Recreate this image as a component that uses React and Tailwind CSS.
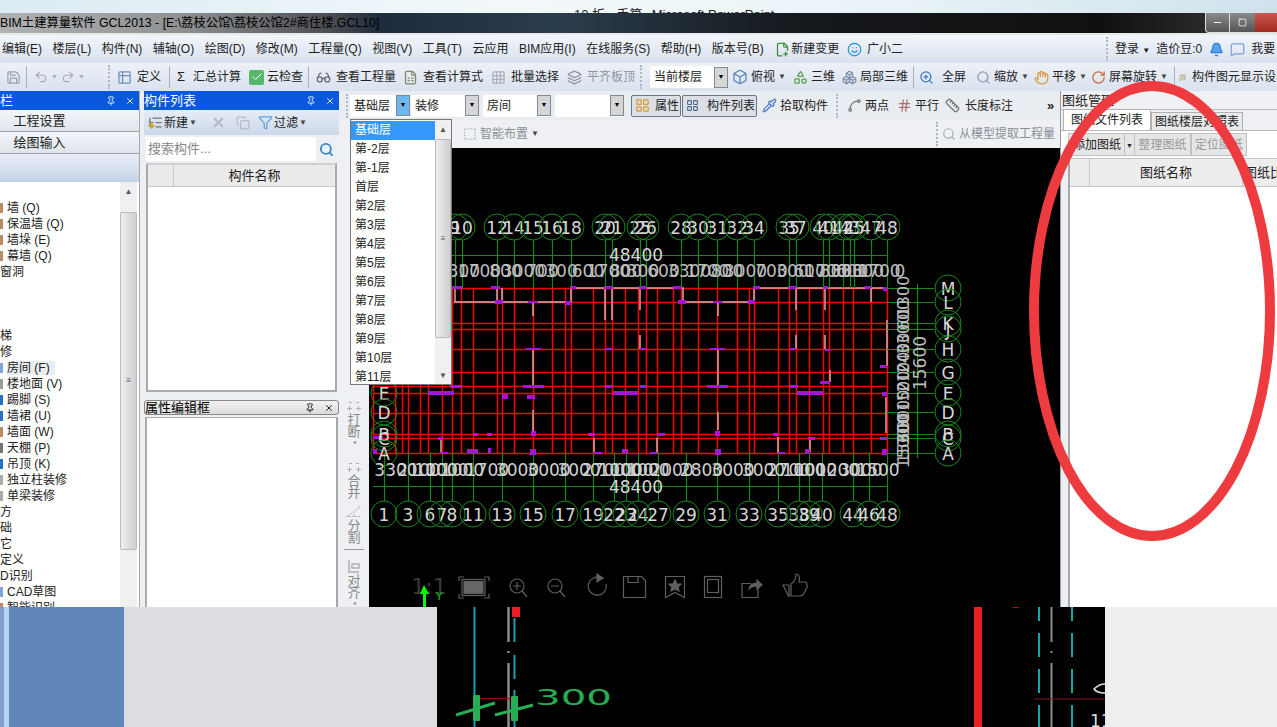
import {
  Save, Undo2, Redo2, Table2, Glasses, FileSpreadsheet, Grid3x3, Layers, Box, Shapes, Boxes,
  ZoomIn, Search, Hand, RotateCw, PencilRuler, FilePlus2, Smile, Bell, MessageSquare,
  Pin, X, Plus, Copy, Filter, ListTree, Pipette, Ruler, Hash, Spline, LayoutGrid, SquareDashed,
  Check, Minus, Square,
} from "lucide-react";

const cjk = "font-['Liberation_Sans','Noto_Sans_CJK_SC',sans-serif]";

const menus = ["编辑(E)", "楼层(L)", "构件(N)", "辅轴(O)", "绘图(D)", "修改(M)", "工程量(Q)", "视图(V)", "工具(T)", "云应用", "BIM应用(I)", "在线服务(S)", "帮助(H)", "版本号(B)"];
const floors = ["基础层", "第-2层", "第-1层", "首层", "第2层", "第3层", "第4层", "第5层", "第6层", "第7层", "第8层", "第9层", "第10层", "第11层"];

const treeRows = [
  ["墙 (Q)", "pl-[7px]", "bg-[#b98a66]"], ["保温墙 (Q)", "pl-[7px]", "bg-[#b98a66]"], ["墙垛 (E)", "pl-[7px]", "bg-[#b98a66]"], ["幕墙 (Q)", "pl-[7px]", "bg-[#b98a66]"],
  ["窗洞", "", ""], ["", "", ""], ["", "", ""], ["", "", ""], ["梯", "", ""], ["修", "", ""],
  ["房间 (F)", "pl-[7px]", "bg-[#7da7d8]"], ["楼地面 (V)", "pl-[7px]", "bg-[#9a9a9a]"], ["踢脚 (S)", "pl-[7px]", "bg-[#2a70c0]"], ["墙裙 (U)", "pl-[7px]", "bg-[#2a70c0]"],
  ["墙面 (W)", "pl-[7px]", "bg-[#b98a66]"], ["天棚 (P)", "pl-[7px]", "bg-[#777777]"], ["吊顶 (K)", "pl-[7px]", "bg-[#2a70c0]"], ["独立柱装修", "pl-[7px]", "bg-[#aaaaaa]"], ["单梁装修", "pl-[7px]", "bg-[#aaaaaa]"],
  ["方", "", ""], ["础", "", ""], ["它", "", ""], ["定义", "", ""], ["D识别", "", ""],
  ["CAD草图", "pl-[7px]", "bg-[#7da7d8]"], ["智能识别", "pl-[7px]", "bg-[#b98a66]"],
];

const hLines = [288, 302, 323, 329, 349, 372, 386, 393, 413, 434, 438, 453];
const vLines = [373, 395, 402, 408, 420, 428, 442, 452, 461, 473, 497, 502, 514, 533, 552, 565, 571, 593, 605, 612, 625, 638, 646, 657, 673, 681, 698, 717, 737, 749, 754, 778, 789, 796, 809, 823, 829, 843, 853, 871, 887];

const topBubbles = [[455, "9"], [462, "10"], [497, "12"], [514, "14"], [533, "15"], [552, "16"], [571, "18"], [605, "20"], [612, "21"], [640, "25"], [646, "26"], [681, "28"], [698, "30"], [717, "31"], [737, "32"], [754, "34"], [789, "35"], [796, "37"], [823, "40"], [829, "41"], [843, "42"], [850, "43"], [854, "45"], [871, "47"], [887, "48"]];
const bottomBubbles = [[384, "1"], [408, "3"], [430, "6"], [442, "7"], [452, "8"], [473, "11"], [502, "13"], [533, "15"], [565, "17"], [593, "19"], [614, "22"], [626, "23"], [638, "24"], [658, "27"], [686, "29"], [717, "31"], [749, "33"], [778, "35"], [799, "38"], [809, "39"], [822, "40"], [853, "44"], [869, "46"], [887, "48"]];
const sideBubbles = [[288, "M"], [302, "L"], [323, "K"], [329, "J"], [349, "H"], [372, "G"], [393, "E"], [412, "D"], [434, "B"], [438, "C"], [453, "A"]];

const dimValues = ["3300", "1700", "800", "3000", "700", "300", "600", "1700", "800", "300", "600"];
const bottomDims = ["3300", "2100", "1000", "1000", "1000", "1700", "3000", "3000", "3000", "2700", "1000", "1000", "1000", "2000", "2800", "3000", "3000", "2700", "1000", "1000", "1200", "3000", "1500", "1700"];
const sideDims = ["1300", "600", "3300", "2400", "2100", "1500", "3000", "300", "1500"];

const purple = [
  [452, 286, 10, 3], [491, 286, 9, 3], [495, 300, 8, 4], [528, 301, 10, 2], [565, 301, 6, 4], [570, 286, 6, 3], [604, 286, 9, 3], [639, 286, 8, 3], [673, 286, 9, 3], [678, 300, 8, 4], [713, 301, 10, 2], [748, 300, 7, 4], [753, 286, 7, 3], [788, 286, 8, 3], [823, 286, 5, 3], [865, 286, 6, 3], [883, 287, 4, 4],
  [526, 348, 15, 2], [605, 348, 7, 2], [640, 348, 6, 2], [710, 348, 15, 2], [790, 348, 6, 2], [825, 349, 5, 2], [880, 365, 7, 3],
  [450, 385, 12, 3], [523, 385, 21, 3], [605, 385, 8, 3], [640, 385, 6, 3], [707, 385, 21, 3], [790, 385, 8, 3], [820, 381, 10, 3], [428, 391, 26, 4], [613, 391, 25, 4], [797, 391, 26, 4], [502, 394, 6, 5], [527, 395, 8, 4], [882, 392, 5, 4],
  [473, 433, 5, 3], [487, 433, 5, 3], [531, 431, 5, 5], [588, 433, 7, 3], [657, 433, 8, 3], [715, 431, 5, 5], [773, 433, 5, 3], [808, 437, 7, 3], [880, 437, 7, 3], [373, 436, 10, 3], [438, 437, 5, 3],
  [373, 449, 4, 5], [440, 452, 8, 2], [467, 449, 11, 4], [488, 448, 3, 5], [530, 449, 6, 6], [593, 452, 9, 2], [622, 449, 6, 4], [650, 452, 7, 2], [715, 449, 6, 6], [778, 452, 7, 2], [805, 449, 5, 4], [882, 449, 5, 6],
];
const walls = [
  "452,288 455,288 455,302 502,302 502,288", "497,288 497,302 571,302 571,288 683,288 683,302 754,302 754,288 887,288",
  "533,302 533,316", "533,349 533,386", "605,288 605,320", "612,288 612,320", "640,288 640,310", "640,335 640,349", "718,302 718,316", "718,349 718,386",
  "796,288 796,310", "796,335 796,349", "825,288 825,310", "825,335 825,349", "830,370 830,382", "871,288 871,302", "887,320 887,366", "886,397 886,433",
  "718,412 718,430", "778,437 778,453", "810,438 810,452", "441,438 441,453", "594,438 594,453", "657,438 657,453", "533,410 533,433",
];

function midpoints(list) {
  return list.slice(0, -1).map(([x], i) => (x + list[i + 1][0]) / 2);
}

function Bubble({ x, y, label }) {
  return (
    <g>
      <circle cx={x} cy={y} r="13" fill="none" stroke="#17861c" strokeWidth="1" />
      <text x={x} y={y + 1} textAnchor="middle" dominantBaseline="central" fontSize="17" fill="#d6d6d6" fontFamily="DejaVu Sans, sans-serif">{label}</text>
    </g>
  );
}

function CadDrawing() {
  const numberProps = { fontFamily: "DejaVu Sans, sans-serif", fill: "#bdbdbd", textAnchor: "middle", dominantBaseline: "central" };
  return (
    <svg className="block w-[691px] h-[459px]" viewBox="369 148 691 459">
      <g strokeWidth="1.5" stroke="#ff0000">
        {hLines.map((y) => <line key={y} x1="373" x2="887" y1={y + 0.5} y2={y + 0.5} />)}
        {vLines.map((x) => <line key={x} x1={x + 0.5} x2={x + 0.5} y1="288" y2="453" />)}
      </g>
      {walls.map((w) => <polyline key={w} points={w} fill="none" stroke="#dca5a5" strokeWidth="1.5" />)}
      {purple.map(([x, y, w, h]) => <rect key={`${x}-${y}`} x={x} y={y} width={w} height={h} fill="#a414dc" />)}

      <g strokeWidth="1.2" stroke="#17861c">
        <line x1="452" x2="887" y1="255.5" y2="255.5" />
        <line x1="373" x2="887" y1="486.5" y2="486.5" />
        <line x1="917.5" x2="917.5" y1="284" y2="458" />
        {topBubbles.map(([x]) => <line key={x} x1={x + 0.5} x2={x + 0.5} y1="240" y2="288" />)}
        {bottomBubbles.map(([x]) => <line key={x} x1={x + 0.5} x2={x + 0.5} y1="453" y2="501" />)}
        {sideBubbles.map(([y]) => <line key={y} x1="887" x2="934" y1={y + 0.5} y2={y + 0.5} />)}
      </g>

      {topBubbles.map(([x, t]) => <Bubble key={x} x={x} y={227} label={t} />)}
      {bottomBubbles.map(([x, t]) => <Bubble key={x} x={x} y={514} label={t} />)}
      {sideBubbles.map(([y, t]) => <Bubble key={y} x={948} y={y} label={t} />)}
      {sideBubbles.slice(6).map(([y, t]) => <Bubble key={y} x={384} y={y} label={t} />)}

      <text x="636" y="255" fontSize="17" {...numberProps} fill="#d6d6d6">48400</text>
      <text x="636" y="487" fontSize="17" {...numberProps} fill="#d6d6d6">48400</text>
      {midpoints(topBubbles).map((x, i) => <text key={x + "t" + i} x={x} y="271" fontSize="17" {...numberProps}>{dimValues[i % dimValues.length]}</text>)}
      <text x="900" y="271" fontSize="17" {...numberProps}>0</text>
      {midpoints(bottomBubbles).map((x, i) => <text key={x + "b" + i} x={x} y="470" fontSize="17" {...numberProps} fill="#d0d0d0">{bottomDims[i]}</text>)}
      {sideDims.map((t, i) => {
        const y = 296 + i * 19;
        return <text key={t + i} x="903" y={y} fontSize="16" transform={`rotate(-90 903 ${y})`} {...numberProps}>{t}</text>;
      })}
      <text x="903" y="438" fontSize="16" transform="rotate(-90 903 438)" {...numberProps}>15600</text>
      <text x="920" y="363" fontSize="17" transform="rotate(-90 920 363)" {...numberProps}>15600</text>

      {/* view toolbar */}
      <g fill="none" stroke="#5f5f5f" strokeWidth="1.2">
        <text x="429" y="586" fontSize="22" fill="#3a3a3a" stroke="none" textAnchor="middle" dominantBaseline="central" fontFamily="DejaVu Sans, sans-serif">1:1</text>
        <polyline points="459,581 459,577 464,577" /><polyline points="484,577 489,577 489,581" /><polyline points="459,594 459,598 464,598" /><polyline points="484,598 489,598 489,594" />
        <rect x="462" y="579.5" width="23" height="16" />
        <rect x="464" y="581.5" width="19" height="12" fill="#666666" />
        <circle cx="517" cy="586" r="7" /><path d="M513 586h8M517 582v8M522 591l5 6" />
        <circle cx="555" cy="586" r="7" /><path d="M551 586h8M560 591l5 6" />
        <path d="M601 578a9 9 0 1 0 5 6" /><path d="M597 574l6 4-6 4z" fill="#5f5f5f" />
        <path d="M623.5 576.5h18l4 4v17h-22zM628 576.5v6h10v-6" />
        <path d="M665.5 576.5h19v21l-9.500-5-9.500 5z" /><path d="M675 580l2 4h4l-3 3 1 4-4-2-4 2 1-4-3-3h4z" fill="#5f5f5f" />
        <rect x="704.500" y="576.500" width="17" height="21" /><rect x="707.500" y="579.500" width="11" height="13" />
        <path d="M758 585v12.500h-16v-14h9" /><path d="M749 589c1-5 5-6 8-6v-3l5 5-5 4v-3c-3 0-6 1-8 3z" fill="#5f5f5f" />
        <path d="M783 585l6 12 0-12zM791 584c3-2 5-5 5-10 3 0 4 3 3 8h6c2 0 2 2 2 3 1 2 0 3-1 4 0 2-1 3-2 4-1 3-3 3-5 3h-8z" />
      </g>
      <text x="439" y="600" fontSize="11" fill="#19c419" textAnchor="middle" fontFamily="DejaVu Sans, sans-serif">Y</text>
      <path d="M424 585l-4 9h3v13h3v-13h3z" fill="#00ff00" />
    </svg>
  );
}

function BottomCad() {
  return (
    <svg className="block w-full h-full" viewBox="437 607 668 120">
      <line x1="474.500" x2="474.500" y1="607" y2="727" stroke="#1a9fb0" strokeWidth="2" />
      <path d="M508.500 607v35M508.500 651v2M508.500 663v64" stroke="#8a8a8a" strokeWidth="2.500" fill="none" />
      <path d="M514.500 618v24M514.500 655v24M514.500 690v37" stroke="#1a9fb0" strokeWidth="2" fill="none" />
      <rect x="512" y="607" width="8" height="10" fill="#ed1c24" />
      <line x1="480" x2="510" y1="698.500" y2="698.500" stroke="#8a1212" />
      <rect x="473" y="695" width="7" height="26" rx="1" fill="#27ae55" />
      <rect x="511" y="696" width="7" height="25" rx="1" fill="#27ae55" />
      <path d="M456 715l39-12M495 715l38-10" stroke="#27ae55" strokeWidth="3" />
      <text x="535" y="705" fontSize="22" fill="#27ae55" textLength="77" lengthAdjust="spacingAndGlyphs" fontFamily="DejaVu Sans, sans-serif">300</text>
      <rect x="974" y="607" width="8" height="120" fill="#ed1c24" />
      <path d="M1011 607a6 3 0 0 0 9 0z" fill="#b3141a" />
      <path d="M1039 607v14M1039 633v24M1039 669v24M1039 705v22" stroke="#14a5a5" strokeWidth="2" fill="none" />
      <path d="M1072 607v14M1072 633v24M1072 669v24M1072 705v22" stroke="#14a5a5" strokeWidth="2" fill="none" />
      <path d="M1051.500 607v35M1051.500 651v2M1051.500 663v64" stroke="#8a8a8a" strokeWidth="2" fill="none" />
      <line x1="1034" x2="1105" y1="699" y2="699" stroke="#8a1212" />
      <path d="M1105 684c-6 0-9 3-11 5 2 3 5 4 11 4" fill="none" stroke="#dddddd" strokeWidth="1.500" />
      <text x="1090" y="727" fontSize="17" fill="#dddddd" fontFamily="DejaVu Sans, sans-serif">11</text>
    </svg>
  );
}

function Tool({ icon, label, className = "", textClass = "", caret, gap = "gap-[3px]" }) {
  return (
    <div className={`flex items-center ${gap} shrink-0 overflow-hidden whitespace-nowrap ${className}`}>
      {icon}
      <span className={textClass}>{label}</span>
      {caret && <span className="text-[8px] text-[#444]">▼</span>}
    </div>
  );
}

function Divider() {
  return <div className="w-px h-[22px] bg-[#a9b1bd] shrink-0" />;
}

function Grip() {
  return <div className="w-[3px] h-[24px] shrink-0 border-l-2 border-dotted border-[#b0b6c0]" />;
}

function Combo({ label, className, active }) {
  return (
    <div className={`flex items-center bg-white h-[22px] shrink-0 text-[12px] text-[#222] ${className}`}>
      <span className="flex-1 pl-[4px] overflow-hidden whitespace-nowrap">{label}</span>
      <span className={`w-[14px] h-[21px] flex items-center justify-center text-[7px] border border-[#7f8a98] ${active ? "bg-[#6fb7ea] text-black" : "bg-[#d6d6d6] text-black"}`}>▼</span>
    </div>
  );
}

function PanelTitle({ title, className = "" }) {
  return (
    <div className={`h-[19px] bg-[#0a58de] text-white text-[13px] flex items-center justify-between pr-[4px] shrink-0 overflow-hidden whitespace-nowrap ${className}`}>
      <span>{title}</span>
      <span className="flex items-center gap-[9px]"><Pin size={10} /><X size={10} /></span>
    </div>
  );
}

// small grey glyphs above the vertical tool labels
function BreakIcon() {
  return (
    <svg width="16" height="15" viewBox="0 0 16 15" fill="none" stroke="#b0b0b0">
      <path d="M1 10.500h5M10 10.500h5M3.500 8v5M12.500 8v5M3 4.500h3M10 4.500h3" />
    </svg>
  );
}

function SplitIcon() {
  return (
    <svg width="18" height="15" viewBox="0 0 18 15" fill="none" stroke="#b0b0b0">
      <path d="M1 12.500h15M3 12l12-9M13 2l3 2M9 12.500v-4" strokeDasharray="2 1" />
    </svg>
  );
}

function AlignIcon() {
  return (
    <svg width="14" height="15" viewBox="0 0 14 15" fill="none" stroke="#b0b0b0" strokeWidth="1.500">
      <path d="M2 1v13M5 5h7v4H5zM2 13h10" />
    </svg>
  );
}

function Vert({ chars, icon, caret, className = "" }) {
  return (
    <div className={`flex flex-col items-center text-[13px] leading-[12px] text-[#8a8a8a] ${className}`}>
      <div className="h-[15px] mb-[1px]">{icon}</div>
      {chars.map((c) => <span key={c}>{c}</span>)}
      {caret && <span className="text-[6px] leading-[6px] mt-[1px]">◂</span>}
    </div>
  );
}

export default function App() {
  return (
    <div className={`relative w-[1277px] h-[727px] overflow-hidden bg-white text-[#222] ${cjk}`}>
      {/* window behind */}
      <div className="h-[13px] overflow-hidden bg-[linear-gradient(90deg,#dcecf3,#f2f8fa_40%,#e9f3f7_70%,#cfe2ec)] flex pl-[574px] pt-[5px] text-[13px] leading-[20px] text-[#222] gap-[9px] whitespace-nowrap">
        <span>10 折 · 手算</span>
        <span>Microsoft PowerPoint</span>
      </div>

      {/* title bar */}
      <div className="h-[22px] flex justify-between bg-[linear-gradient(90deg,#b0b2b4_0px,#8f9193_180px,#4b4d50_330px,#1c2c3c_380px,#2a3d4c_560px,#15181c_800px,#101010_1100px,#3a3a3a_1277px)] border-b-2 border-[#e8e8e8]">
        <span className="text-[12.300px] leading-[20px] text-black whitespace-nowrap">BIM土建算量软件 GCL2013 - [E:\荔枝公馆\荔枝公馆2#商住楼.GCL10]</span>
        <div className="flex h-[20px] items-stretch">
          <div className="w-[25px] ml-[2px] flex items-center justify-center bg-[linear-gradient(#8a8a8a,#555)] rounded-bl-[4px] border border-[#ddd] border-t-0"><Minus size={11} className="text-white" /></div>
          <div className="w-[25px] flex items-center justify-center bg-[linear-gradient(#8a8a8a,#555)] border-b border-[#ddd]"><Square size={9} className="text-white" /></div>
          <div className="w-[22px] bg-[linear-gradient(#c9584e,#a32a1f)] border-b border-[#ddd]" />
        </div>
      </div>

      {/* menu */}
      <div className="h-[28px] flex items-center text-[12px] bg-[linear-gradient(#f2f5fb,#d9e2f0)]">
        <div className="flex items-center gap-[10.500px] pl-[2px] w-[1106px] whitespace-nowrap">
          {menus.map((m) => <span key={m}>{m}</span>)}
          <Tool className="ml-[1px]" gap="gap-[1px]" icon={<FilePlus2 size={15} className="text-[#3a8f3a]" />} label="新建变更" />
          <Tool className="-ml-[3px]" gap="gap-[5px]" icon={<Smile size={15} className="text-[#1f93d8]" />} label="广小二" />
        </div>
        <Grip />
        <div className="flex items-center gap-[6px] pl-[6px] whitespace-nowrap">
          <span>登录 <span className="text-[8px]">▼</span></span>
          <span>造价豆:0</span>
          <Bell size={15} className="text-[#2d7fe0] ml-[1px]" fill="#5aa0ec" />
          <MessageSquare size={15} className="text-[#7aa2d8]" />
          <span>我要</span>
        </div>
      </div>

      {/* main toolbar */}
      <div className="h-[28px] flex items-center text-[12px] bg-[linear-gradient(#edf1f8,#dae2ef)] whitespace-nowrap">
        <Tool className="w-[26px] pl-[6px]" icon={<Save size={15} className="text-[#9aa4b0]" />} label="" />
        <Divider />
        <Tool className="w-[81px] pl-[7px] text-[#a4acb8]" icon={<Undo2 size={14} />} label={<span className="flex items-center gap-[3px]"><span className="text-[7px]">▼</span><Redo2 size={14} /><span className="text-[7px]">▼</span></span>} />
        <Grip />
        <Tool className="w-[58px] pl-[6px]" gap="gap-[5px]" icon={<Table2 size={15} className="text-[#6d8fc0]" />} label="定义" />
        <Divider />
        <Tool className="w-[76px] pl-[7px]" gap="gap-[8px]" icon={<span className="text-[13px]">Σ</span>} label="汇总计算" />
        <Tool className="w-[62px] pl-[3px]" icon={<span className="w-[15px] h-[15px] rounded-[2px] bg-[#56b96a] flex items-center justify-center"><Check size={12} className="text-white" /></span>} label="云检查" />
        <Divider />
        <Tool className="w-[91px] pl-[7px]" gap="gap-[5px]" icon={<Glasses size={15} className="text-[#667]" />} label="查看工程量" />
        <Tool className="w-[87px] pl-[3px]" gap="gap-[5px]" icon={<FileSpreadsheet size={15} className="text-[#7d8a6a]" />} label="查看计算式" />
        <Tool className="w-[76px] pl-[4px]" gap="gap-[5px]" icon={<Grid3x3 size={15} className="text-[#aab2bd]" />} label="批量选择" />
        <Tool className="w-[77px] pl-[4px] text-[#8e949c]" gap="gap-[5px]" icon={<Layers size={15} />} label="平齐板顶" />
        <Grip />
        <div className="w-[7px] shrink-0" />
        <Combo label="当前楼层" className="w-[78px]" />
        <Tool className="w-[62px] pl-[4px]" icon={<Box size={16} className="text-[#5f88b8]" />} label="俯视" caret />
        <Tool className="w-[48px] pl-[3px]" icon={<Shapes size={15} className="text-[#5a9f4a]" />} label="三维" />
        <Tool className="w-[75px] pl-[4px]" icon={<Boxes size={15} className="text-[#7f8fa8]" />} label="局部三维" />
        <Divider />
        <Tool className="w-[59px] pl-[5px]" gap="gap-[8px]" icon={<ZoomIn size={15} className="text-[#3a78c0]" />} label="全屏" />
        <Tool className="w-[58px] pl-[3px]" icon={<Search size={15} className="text-[#8a9ab0]" />} label="缩放" caret />
        <Tool className="w-[57px] pl-[3px]" icon={<Hand size={15} className="text-[#d89a40]" />} label="平移" caret />
        <Tool className="w-[86px] pl-[3px]" icon={<RotateCw size={15} className="text-[#c86a3a]" />} label="屏幕旋转" caret />
        <Divider />
        <Tool className="w-[101px] pl-[4px]" gap="gap-[6px]" icon={<PencilRuler size={15} className="text-[#a88a50]" />} label="构件图元显示设" />
      </div>

      {/* work area */}
      <div className="h-[516px] flex bg-[#eceff4]">
        {/* navigation panel */}
        <div className="w-[140px] flex flex-col shrink-0 border-r border-[#a8a8a8]">
          <PanelTitle title="栏" />
          <div className="h-[22px] flex items-center justify-center pr-[60px] text-[13px] bg-[linear-gradient(#f4f6f9,#dfe4ec)] border-b border-[#9ca3ad]">工程设置</div>
          <div className="h-[22px] flex items-center justify-center pr-[60px] text-[13px] bg-[linear-gradient(#f4f6f9,#dfe4ec)] border-b border-[#9ca3ad]">绘图输入</div>
          <div className="h-[28px] bg-[linear-gradient(#e9eef6,#c4d2e6)]" />
          <div className="flex-1 flex bg-white overflow-hidden">
            <div className="flex-1 pt-[18px] text-[12px] overflow-hidden">
              {treeRows.map(([t, pad, sw], i) => (
                <div key={i} className={`relative h-[16px] leading-[16px] whitespace-nowrap ${pad}`}>
                  {sw && <span className={`absolute left-0 top-[3px] w-[3px] h-[10px] ${sw}`} />}
                  <span className={t.startsWith("房间") ? "bg-[#e8edf3] pr-[5px]" : ""}>{t}</span>
                </div>
              ))}
            </div>
            <div className="w-[17px] mr-[2px] flex flex-col items-center bg-[#f0f0f0] text-[8px] text-[#555]">
              <span className="h-[30px] leading-[19px] shrink-0">▲</span>
              <div className="w-full h-[338px] shrink-0 bg-[linear-gradient(90deg,#eee,#cfcfcf)] rounded-[2px] border border-[#bbb] flex items-center justify-center">≡</div>
            </div>
          </div>
        </div>

        {/* component list panel */}
        <div className="w-[195px] ml-[4px] flex flex-col shrink-0">
          <PanelTitle title="构件列表" />
          <div className="h-[25px] flex items-center pl-[4px] text-[12px] bg-[linear-gradient(#e6ecf5,#ccd8ea)] text-[#222] whitespace-nowrap">
            <Tool icon={<span className="relative"><ListTree size={15} className="text-[#777]" /><Plus size={9} className="absolute -left-[1px] bottom-0 text-[#e0a020]" strokeWidth={4} /></span>} label="新建" caret className="w-[58px]" gap="gap-[1px]" />
            <X size={15} className="text-[#b4bac4] ml-[5px]" strokeWidth={3} />
            <Copy size={14} className="text-[#b4bac4] ml-[10px]" />
            <Tool className="ml-[8px]" gap="gap-[1px]" icon={<Filter size={15} className="text-[#5aa0e0]" />} label="过滤" caret />
          </div>
          <div className="h-[28px] flex items-center pl-[2px] pr-[2px]">
            <div className="w-[170px] h-[24px] bg-white text-[13px] leading-[24px] pl-[2px] text-[#888]">搜索构件...</div>
            <div className="flex-1 flex justify-center"><Search size={15} className="text-[#3a88c8]" strokeWidth={3} /></div>
          </div>
          <div className="h-[229px] mx-[2px] bg-white border-2 border-[#a9a9a9] border-t-[#d0d0d0]">
            <div className="h-[22px] flex bg-[#eaeaea] border-b border-[#c8c8c8] text-[13px]">
              <div className="w-[26px] border-r border-[#c8c8c8]" />
              <div className="flex-1 text-center leading-[22px]">构件名称</div>
            </div>
          </div>
          <div className="mt-[8px] h-[15px] flex justify-between items-center pr-[4px] bg-[linear-gradient(#f2f2f2,#dadada)] rounded-[3px] border border-[#888] text-[13px] text-black">
            <span>属性编辑框</span>
            <span className="flex items-center gap-[9px]"><Pin size={10} /><X size={10} /></span>
          </div>
          <div className="flex-1 mx-[1px] mt-[2px] bg-white border-x-2 border-t border-[#a9a9a9]" />
        </div>

        {/* center */}
        <div className="w-[721px] flex flex-col shrink-0 relative">
          <div className="h-[29px] flex items-center pl-[7px] text-[12px] bg-[#e9ecf1] whitespace-nowrap">
            <Grip />
            <div className="w-[1px] shrink-0" />
            <Combo label="基础层" className="w-[60px]" active />
            <Combo label="装修" className="w-[68px] ml-[1px]" />
            <Combo label="房间" className="w-[68px] ml-[4px]" />
            <Combo label="" className="w-[69px] ml-[4px]" />
            <div className="w-[50px] h-[22px] ml-[7px] flex items-center gap-[5px] pl-[3px] border border-[#6e7680] rounded-[2px] bg-[#dce0e6] shrink-0 overflow-hidden"><LayoutGrid size={15} className="text-[#d89a30]" />属性</div>
            <div className="w-[75px] h-[22px] ml-[1px] flex items-center gap-[8px] pl-[3px] border border-[#6e7680] rounded-[2px] bg-[#dce0e6] shrink-0 overflow-hidden"><LayoutGrid size={13} className="text-[#4a6a90]" />构件列表</div>
            <Tool className="w-[79px] pl-[5px]" icon={<Pipette size={15} className="text-[#4a7ac0]" />} label="拾取构件" />
            <Grip />
            <Tool className="w-[52px] pl-[8px]" icon={<Spline size={15} className="text-[#777]" />} label="两点" />
            <Tool className="w-[50px] pl-[6px]" icon={<Hash size={15} className="text-[#a87070]" />} label="平行" />
            <Tool className="w-[100px] pl-[4px]" gap="gap-[5px]" icon={<Ruler size={15} className="text-[#777]" />} label="长度标注" />
            <span className="font-bold text-[13px] ml-[6px]">»</span>
          </div>
          <div className="h-[28px] flex items-center text-[12px] text-[#8a8f96] bg-[#eef0f4] whitespace-nowrap">
            <div className="w-[122px]" />
            <Tool className="w-[80px] pl-[2px]" icon={<SquareDashed size={14} className="text-[#a8aeb6]" />} label="智能布置" caret />
            <div className="w-[395px]" />
            <Grip />
            <Tool className="pl-[3px] text-[12px]" icon={<Search size={14} className="text-[#a8aeb6]" />} label="从模型提取工程量" />
          </div>
          <div className="flex-1 flex min-h-0">
            <div className="w-[30px] shrink-0 bg-[#eef0f4] flex flex-col items-center pt-[250px] overflow-hidden">
              <Vert chars={["打", "断"]} caret icon={<BreakIcon />} />
              <Vert chars={["合", "并"]} className="mt-[14px]" icon={<BreakIcon />} />
              <Vert chars={["分", "割"]} className="mt-[5px]" icon={<SplitIcon />} />
              <div className="w-[20px] h-px bg-[#999] mt-[5px] shrink-0" />
              <Vert chars={["对", "齐"]} className="mt-[9px]" caret icon={<AlignIcon />} />
            </div>
            <div className="flex-1 bg-black overflow-hidden"><CadDrawing /></div>
          </div>

          {/* floor dropdown */}
          <div className="absolute left-[11px] top-[28px] w-[102px] h-[266px] flex bg-white border border-[#777] text-[12px]">
            <div className="flex-1 pt-[1px]">
              {floors.map((f, i) => (
                <div key={f} className={`h-[19px] leading-[19px] pl-[4px] ${i === 0 ? "bg-[#3399ff] text-white" : "text-[#222]"}`}>{f}</div>
              ))}
            </div>
            <div className="w-[16px] flex flex-col items-center text-[8px] text-[#555] bg-[#f0f0f0]">
              <span className="h-[19px] leading-[19px]">▲</span>
              <div className="w-full h-[199px] bg-[linear-gradient(90deg,#eee,#cfcfcf)] border border-[#bbb] rounded-[2px] flex items-center justify-center">≡</div>
              <span className="mt-auto h-[16px] leading-[16px]">▼</span>
            </div>
          </div>
        </div>

        {/* drawings panel */}
        <div className="flex-1 flex flex-col min-w-0 border-l border-[#999] overflow-hidden">
          <div className="h-[19px] text-[13px] leading-[19px] pl-[1px] bg-[#f0f1f4] border-b border-[#b8b8b8]">图纸管理</div>
          <div className="h-[21px] flex items-end pl-[2px] text-[12px] whitespace-nowrap bg-[#eef0f4] border-b border-[#b8b8b8]">
            <div className="w-[88px] h-[21px] bg-white border border-[#b0b0b0] border-b-0 text-center leading-[20px]">图纸文件列表</div>
            <div className="w-[92px] h-[18px] bg-[#e9e9e9] border border-[#b0b0b0] border-b-0 text-center leading-[18px]">图纸楼层对照表</div>
          </div>
          <div className="h-[27px] flex items-center pl-[7px] text-[12px] bg-white whitespace-nowrap">
            <div className="w-[57px] h-[23px] leading-[23px] pl-[4px] bg-[#e6e6e6] border border-[#c0c0c0]">添加图纸</div>
            <div className="w-[9px] h-[23px] leading-[23px] text-[7px] text-center bg-[#e6e6e6] border-y border-[#c0c0c0]">▼</div>
            <div className="w-[57px] h-[23px] leading-[23px] text-center text-[#999] bg-[#e6e6e6] border border-[#c0c0c0]">整理图纸</div>
            <div className="w-[56px] h-[23px] leading-[23px] text-center text-[#999] bg-[#e6e6e6] border border-[#c0c0c0]">定位图纸</div>
          </div>
          <div className="flex-1 ml-[7px] bg-white border-l-2 border-[#a9a9a9] overflow-hidden">
            <div className="h-[29px] flex bg-[#ededed] border-y border-[#c8c8c8] text-[13px] leading-[27px] whitespace-nowrap">
              <div className="w-[20px] shrink-0 border-r border-[#c8c8c8]" />
              <div className="w-[153px] shrink-0 text-center border-r border-[#c8c8c8]">图纸名称</div>
              <div className="pl-[1px] shrink-0">图纸比例</div>
            </div>
          </div>
        </div>
      </div>

      {/* desktop below */}
      <div className="h-[120px] flex">
        <div className="w-[124px] flex bg-[#6187ba]">
          <div className="w-[4px] bg-[#7ea0cc]" />
          <div className="w-[5px] bg-[#b8d4f2]" />
        </div>
        <div className="w-[313px] bg-[#dddee1]" />
        <div className="w-[668px] bg-black"><BottomCad /></div>
        <div className="flex-1 bg-[#eeeeee]" />
      </div>

      {/* hand-drawn red ring over the drawings panel */}
      <svg className="absolute left-0 top-0 pointer-events-none" width="1277" height="727">
        <ellipse cx="1152" cy="311" rx="118" ry="225" fill="none" stroke="#ee3b40" strokeWidth="10" />
      </svg>
    </div>
  );
}
